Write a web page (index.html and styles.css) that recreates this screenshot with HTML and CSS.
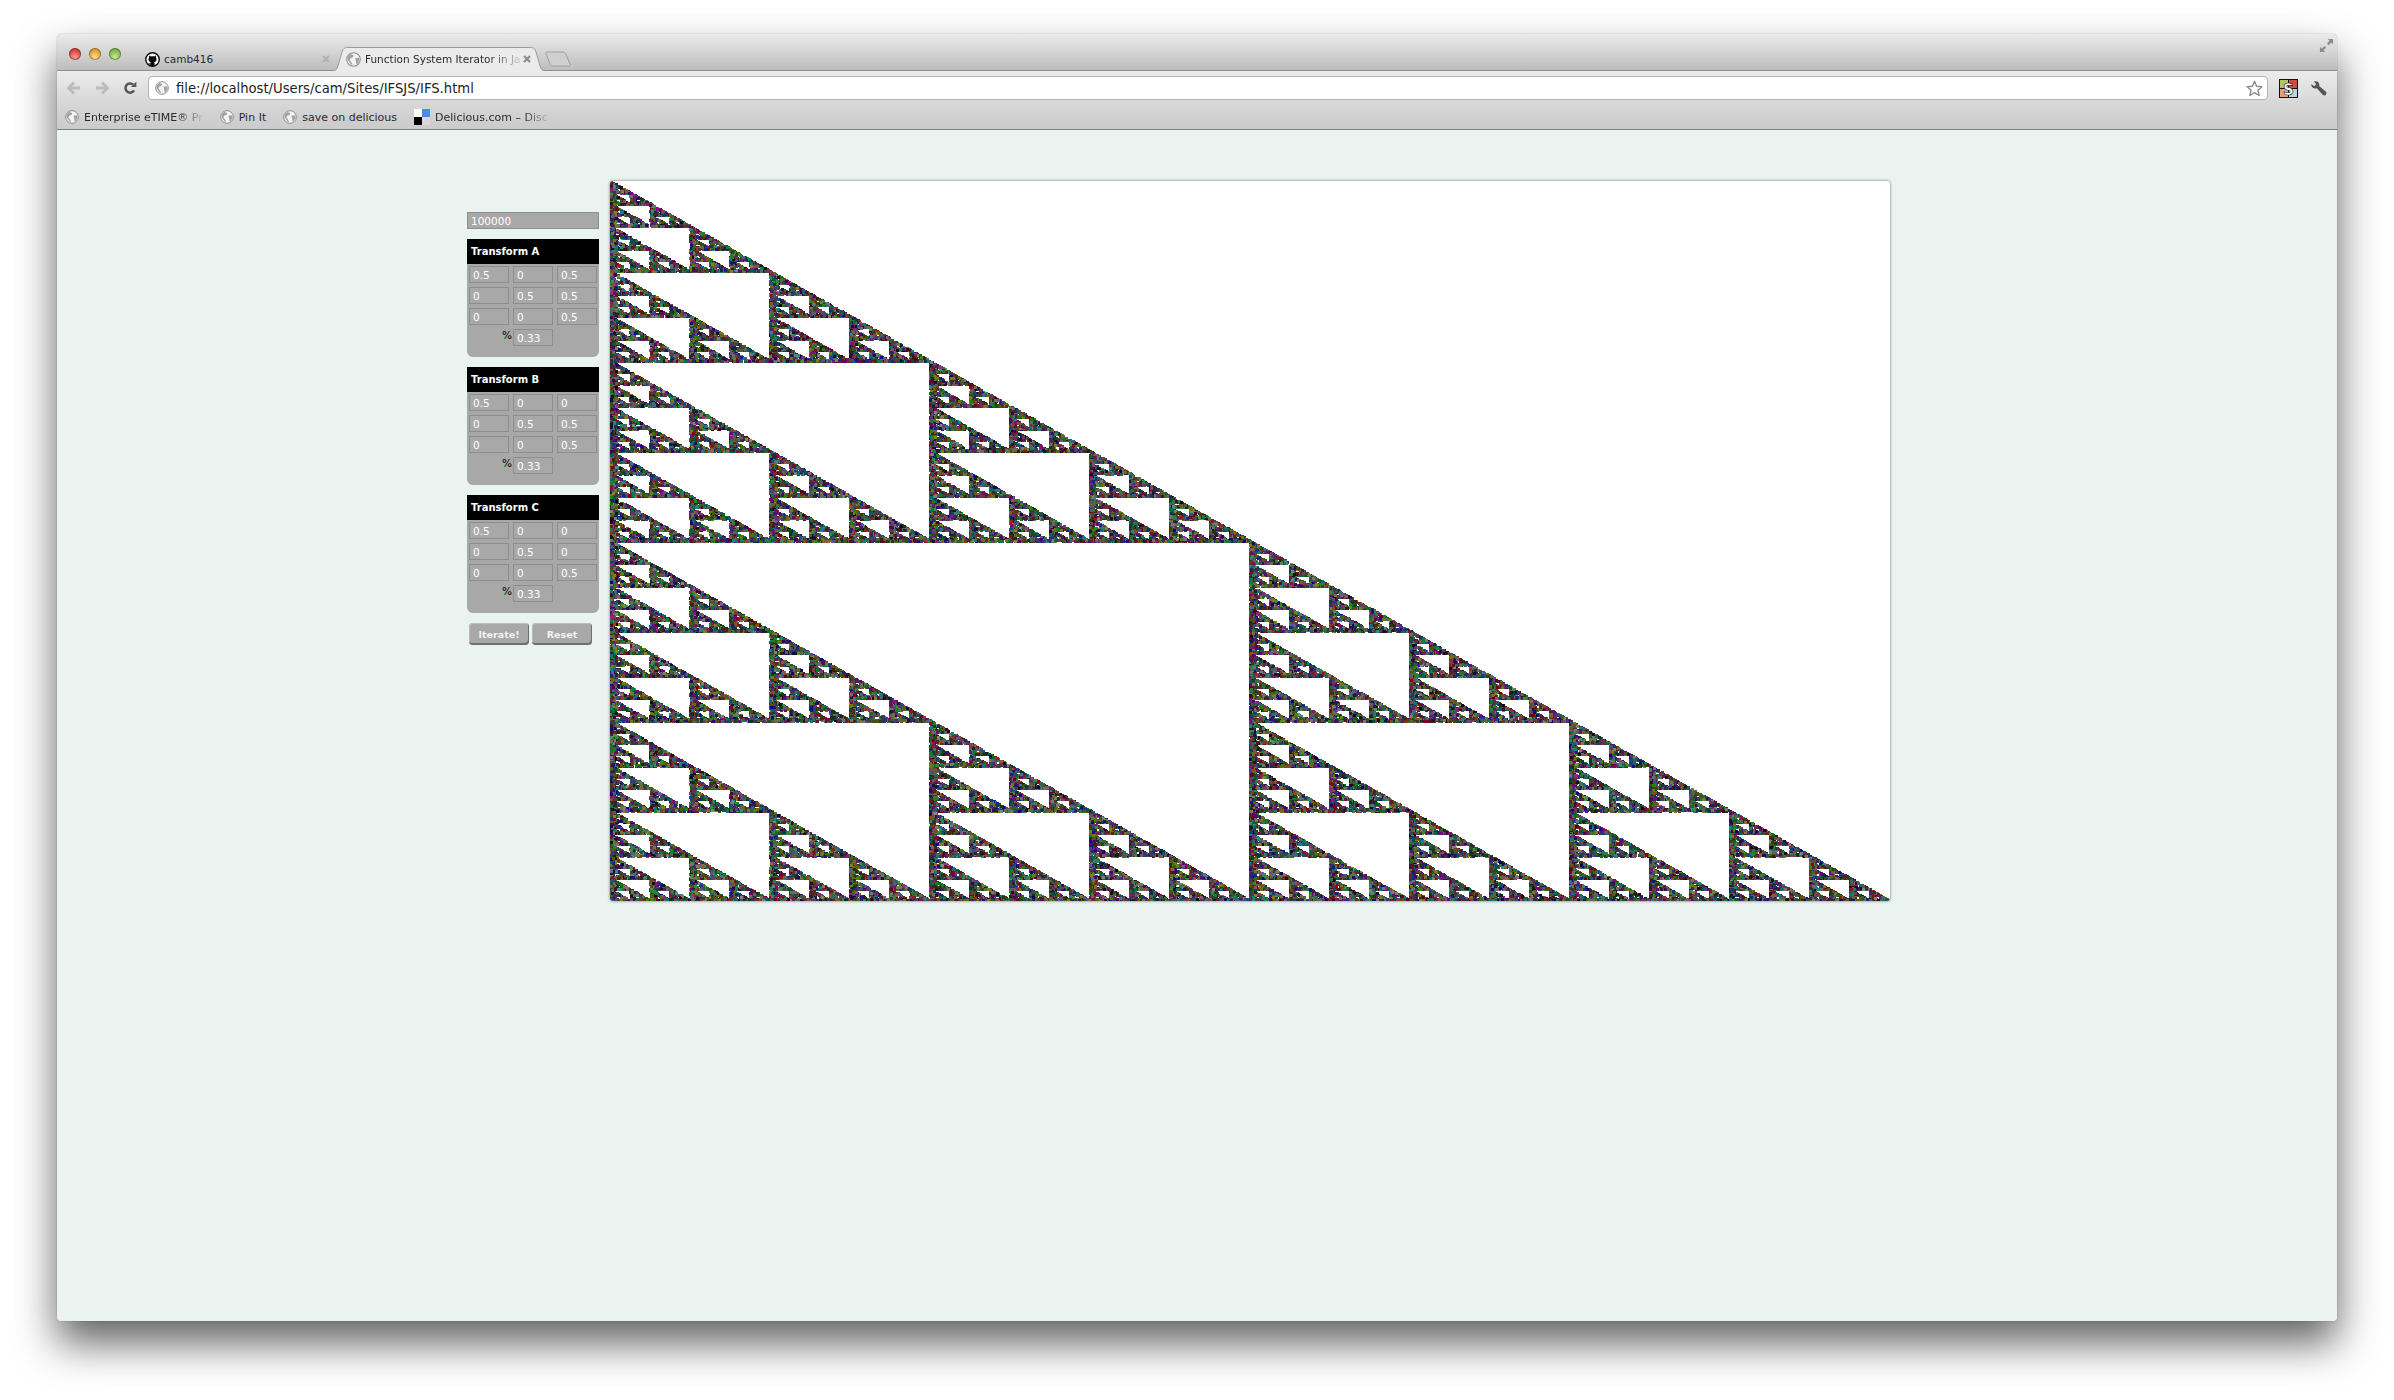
FILE: index.html
```html
<!DOCTYPE html>
<html>

<head>
    <title>Function System Iterator in JavaScript</title>
    <meta charset="UTF-8">
    <link rel="stylesheet" href="styles.css">
</head>

<body>
    <svg class="defs">
        <defs>
            <symbol id="globe" viewBox="0 0 16 16">
                <circle cx="8" cy="8" r="7.2" fill="#f4f4f4" stroke="#8a8a8a" stroke-width="1.1"/>
                <path d="M5 2.2 8.2 3.4 7.4 5.6 5 6.4 3.8 8.6 5.6 10.6 7 13.8 5.4 13.4 3.4 10.6 1.6 8 2.4 4.6Z" fill="#a2a2a2"/>
                <path d="M9.6 6.6 13.6 6 14.4 8.6 12.4 12.6 10.8 13 10.6 9.6Z" fill="#a2a2a2"/>
            </symbol>
            <symbol id="close" viewBox="0 0 10 10">
                <path d="M2 2 8 8M8 2 2 8" stroke="currentColor" stroke-width="2.2"/>
            </symbol>
        </defs>
    </svg>

    <div class="window">
        <div class="titlebar">
            <div class="lights">
                <span class="light red"></span>
                <span class="light amber"></span>
                <span class="light green"></span>
            </div>
            <div class="tabs">
                <div class="tab">
                    <svg class="tab-shape" viewBox="0 0 214 24" preserveAspectRatio="none">
                        <path d="M0 24C4 24 5 22 6 19L10 5C11 2 12 .5 16 .5H198C202 .5 203 2 204 5L208 19C209 22 210 24 214 24Z" fill="#d6d6d6" stroke="#a8a8a8"/>
                    </svg>
                    <svg class="favicon" viewBox="0 0 16 16">
                        <circle cx="8" cy="8" r="7.2" fill="#fff" stroke="#0a0a0a" stroke-width="1.5"/>
                        <path d="M4.6 3.6 6.2 4.7C7.3 4.3 8.7 4.3 9.8 4.7L11.4 3.6C11.8 4.5 11.9 5.3 11.7 6 12.3 6.7 12.5 7.5 12.3 8.4 12 9.8 10.9 10.5 9.7 10.7 10 11.1 10.2 11.7 10.2 12.4V15H5.8V13.2C4.7 13.5 4 13 3.5 12 4.1 12.1 4.8 12.3 5.8 12.1 5.8 11.6 6 11.1 6.3 10.7 5.1 10.5 4 9.8 3.7 8.4 3.5 7.5 3.7 6.7 4.3 6 4.1 5.3 4.2 4.5 4.6 3.6Z" fill="#0a0a0a"/>
                    </svg>
                    <span class="tab-title">camb416</span>
                    <svg class="tab-close"><use href="#close"/></svg>
                </div>
                <div class="tab active">
                    <svg class="tab-shape" viewBox="0 0 214 24" preserveAspectRatio="none">
                        <path d="M0 24C4 24 5 22 6 19L10 5C11 2 12 .5 16 .5H198C202 .5 203 2 204 5L208 19C209 22 210 24 214 24" fill="#ebebeb" stroke="#9c9c9c"/>
                    </svg>
                    <svg class="favicon"><use href="#globe"/></svg>
                    <span class="tab-title fading">Function System Iterator in Ja</span>
                    <svg class="tab-close"><use href="#close"/></svg>
                </div>
                <svg class="new-tab" viewBox="0 0 26 16">
                    <path d="M2 1H18C19.5 1 20 1.6 20.8 3L25 13C25.6 14.3 25 15 23.6 15H8C6.6 15 5.8 14.5 5.2 13.2L1 3C.5 1.8 .9 1 2 1Z" fill="#d0d0d0" stroke="#9e9e9e"/>
                </svg>
            </div>
            <svg class="fullscreen" viewBox="0 0 16 16">
                <path d="M9.2 1H15V6.8L13 4.8 10.2 7.6 8.4 5.8 11.2 3ZM6.8 15H1V9.2L3 11.2 5.8 8.4 7.6 10.2 4.8 13Z" fill="#8d8d8d"/>
            </svg>
        </div>

        <div class="toolbar">
            <svg class="nav-icon" viewBox="0 0 14 14">
                <path d="M7 1.5 1.5 7 7 12.5M2 7H13" fill="none" stroke="#bcbcbc" stroke-width="2.8"/>
            </svg>
            <svg class="nav-icon" viewBox="0 0 14 14">
                <path d="M7 1.5 12.5 7 7 12.5M12 7H1" fill="none" stroke="#bcbcbc" stroke-width="2.8"/>
            </svg>
            <svg class="nav-icon reload" viewBox="0 0 14 14">
                <path d="M11 9.4A4.6 4.6 0 1 1 10.2 3.7" fill="none" stroke="#565656" stroke-width="2.5"/>
                <path d="M8 6H13.4V.6Z" fill="#565656"/>
            </svg>
            <div class="omnibox">
                <svg class="favicon"><use href="#globe"/></svg>
                <span class="url">file://localhost/Users/cam/Sites/IFSJS/IFS.html</span>
                <svg class="star" viewBox="0 0 18 18">
                    <path d="M9 1.4 11.2 6.6 16.8 7.1 12.6 10.8 13.9 16.4 9 13.4 4.1 16.4 5.4 10.8 1.2 7.1 6.8 6.6Z" fill="#fff" stroke="#8c8c8c" stroke-width="1.5" stroke-linejoin="round"/>
                </svg>
            </div>
            <svg class="ext-icon" viewBox="0 0 19 19">
                <rect width="19" height="19" fill="#111"/>
                <rect x="1" y="1" width="8" height="8" fill="#b4c268"/>
                <rect x="10" y="1" width="8" height="8" fill="#c8503e"/>
                <rect x="1" y="10" width="8" height="8" fill="#dca27e"/>
                <rect x="10" y="10" width="8" height="8" fill="#b0d6ea"/>
                <text x="9.5" y="15.5" class="ext-letter">S</text>
            </svg>
            <svg class="wrench" viewBox="0 0 18 18">
                <path d="M1.6 4.2 4.4 6.6 6.6 4.6 4.2 1.8C6.4.8 8.8 1.6 9.6 3.6 10 4.6 10 5.6 9.7 6.4L16.6 12.2C17.6 13.2 17.6 14.6 16.8 15.6 15.8 16.6 14.4 16.6 13.4 15.6L7.2 8.8C5 9.6 2.8 8.8 1.8 7 1.3 6.1 1.2 5.1 1.6 4.2Z" fill="#555"/>
            </svg>
        </div>

        <div class="bookmarks">
            <div class="bookmark">
                <svg class="favicon"><use href="#globe"/></svg>
                <span class="bookmark-title fading">Enterprise eTIME® Pr</span>
            </div>
            <div class="bookmark">
                <svg class="favicon"><use href="#globe"/></svg>
                <span class="bookmark-title">Pin It</span>
            </div>
            <div class="bookmark">
                <svg class="favicon"><use href="#globe"/></svg>
                <span class="bookmark-title">save on delicious</span>
            </div>
            <div class="bookmark">
                <svg class="delicious" viewBox="0 0 16 16">
                    <rect width="8" height="8" fill="#fff"/>
                    <rect x="8" width="8" height="8" fill="#4a8fdc"/>
                    <rect y="8" width="8" height="8" fill="#000"/>
                    <rect x="8" y="8" width="8" height="8" fill="#d8d8d8"/>
                </svg>
                <span class="bookmark-title fading">Delicious.com – Disc</span>
            </div>
        </div>

        <div class="page">
            <div class="controls">
                <input class="count" type="text" value="100000">

                <div class="transform">
                    <h3>Transform A</h3>
                    <div class="matrix">
                        <input type="text" value="0.5"><input type="text" value="0"><input type="text" value="0.5">
                        <input type="text" value="0"><input type="text" value="0.5"><input type="text" value="0.5">
                        <input type="text" value="0"><input type="text" value="0"><input type="text" value="0.5">
                        <label>%</label><input type="text" value="0.33">
                    </div>
                </div>

                <div class="transform">
                    <h3>Transform B</h3>
                    <div class="matrix">
                        <input type="text" value="0.5"><input type="text" value="0"><input type="text" value="0">
                        <input type="text" value="0"><input type="text" value="0.5"><input type="text" value="0.5">
                        <input type="text" value="0"><input type="text" value="0"><input type="text" value="0.5">
                        <label>%</label><input type="text" value="0.33">
                    </div>
                </div>

                <div class="transform">
                    <h3>Transform C</h3>
                    <div class="matrix">
                        <input type="text" value="0.5"><input type="text" value="0"><input type="text" value="0">
                        <input type="text" value="0"><input type="text" value="0.5"><input type="text" value="0">
                        <input type="text" value="0"><input type="text" value="0"><input type="text" value="0.5">
                        <label>%</label><input type="text" value="0.33">
                    </div>
                </div>

                <div class="buttons">
                    <button id="iterate">Iterate!</button>
                    <button id="reset">Reset</button>
                </div>
            </div>

            <canvas id="ifs" width="1280" height="720"></canvas>
        </div>
    </div>

    <script src="script.js"></script>
</body>

</html>
```

FILE: styles.css
```css
body {
    font-family: "DejaVu Sans", "Open Sans", sans-serif;
    margin: 0;
    padding: 34px 57px 0;
    height: 1400px;
    box-sizing: border-box;
    overflow: hidden;
    background: white;
}
.defs {
    display: none;
}
.window {
    height: 1287px;
    display: flex;
    flex-direction: column;
    border-radius: 5px 5px 4px 4px;
    box-shadow: 0 22px 42px rgba(0,0,0,0.62), 0 0 1px #666;
    overflow: hidden;
}
.titlebar {
    height: 37px;
    box-sizing: border-box;
    flex: none;
    display: flex;
    align-items: flex-end;
    background: linear-gradient(#ebebeb, #bdbdbd);
    border-bottom: 1px solid #8f8f8f;
    position: relative;
}
.lights {
    display: flex;
    gap: 8px;
    margin: 0 0 10px 12px;
}
.light {
    width: 12px;
    height: 12px;
    border-radius: 50%;
    box-shadow: inset 0 0 0 1px rgba(0,0,0,0.3);
}
.red {
    background: radial-gradient(circle at 50% 75%, #ff9a94, #d23a36 70%);
}
.amber {
    background: radial-gradient(circle at 50% 75%, #ffdc90, #d9962a 70%);
}
.green {
    background: radial-gradient(circle at 50% 75%, #cbeb96, #74b044 70%);
}
.tabs {
    display: flex;
    align-items: flex-end;
    margin-left: 10px;
    margin-bottom: -1px;
}
.tab {
    width: 214px;
    height: 24px;
    margin-right: -13px;
    padding: 0 14px 0 14px;
    box-sizing: border-box;
    display: flex;
    align-items: center;
    position: relative;
    font-size: 10.5px;
    color: #2a2a2a;
}
.tab.active {
    z-index: 1;
}
.tab-shape {
    position: absolute;
    left: 0;
    top: 0;
    width: 100%;
    height: 100%;
    z-index: -1;
}
.tab-title {
    flex: 1;
    white-space: nowrap;
    overflow: hidden;
}
.tab .favicon {
    width: 15px;
    height: 15px;
    margin-right: 4px;
}
.fading {
    -webkit-mask-image: linear-gradient(to right, #000 78%, rgba(0,0,0,0.1));
}
.tab-close {
    width: 10px;
    height: 10px;
    flex: none;
    color: #b0b0b0;
}
.active .tab-close {
    color: #8d8d8d;
}
.favicon {
    width: 14px;
    height: 14px;
    flex: none;
}
.new-tab {
    width: 26px;
    height: 16px;
    margin: 0 0 4px 12px;
}
.fullscreen {
    width: 15px;
    height: 15px;
    position: absolute;
    right: 3px;
    top: 4px;
}
.toolbar {
    height: 34px;
    flex: none;
    display: flex;
    align-items: center;
    padding-left: 10px;
    background: linear-gradient(#ececec, #d6d6d6);
}
.nav-icon {
    width: 14px;
    height: 14px;
    margin-right: 14px;
    flex: none;
}
.reload {
    margin-right: 11px;
}
.omnibox {
    width: 2120px;
    height: 24px;
    box-sizing: border-box;
    display: flex;
    align-items: center;
    padding: 0 4px 0 6px;
    background: white;
    border: 1px solid #b3b3b3;
    border-radius: 4px;
}
.url {
    flex: 1;
    margin-left: 7px;
    font-size: 13.2px;
    color: #222;
}
.star {
    width: 17px;
    height: 17px;
}
.ext-icon {
    width: 19px;
    height: 19px;
    margin-left: 11px;
}
.ext-letter {
    font: bold 15px "DejaVu Sans", sans-serif;
    text-anchor: middle;
    fill: white;
    stroke: #111;
    stroke-width: 0.6;
}
.wrench {
    width: 17px;
    height: 17px;
    margin-left: 12px;
}
.bookmarks {
    height: 25px;
    box-sizing: border-box;
    flex: none;
    display: flex;
    align-items: center;
    padding-left: 8px;
    gap: 17px;
    background: linear-gradient(#d6d6d6, #cbcbcb);
    border-bottom: 1px solid #808080;
    font-size: 11px;
    color: #2a2a2a;
}
.bookmark {
    display: flex;
    align-items: center;
    gap: 5px;
}
.bookmark-title {
    white-space: nowrap;
}
.delicious {
    width: 16px;
    height: 16px;
}
.page {
    flex: 1;
    display: flex;
    align-items: flex-start;
    gap: 11px;
    padding: 51px 0 0 410px;
    background: #eaf3ef;
}
.controls {
    width: 132px;
    padding-top: 31px;
    flex: none;
}
input {
    box-sizing: border-box;
    width: 40px;
    height: 17px;
    margin: 0;
    padding: 0 3px;
    background: #a8a8a8;
    border: 1px solid #8e8e8e;
    border-radius: 0;
    color: white;
    font-family: "DejaVu Sans", sans-serif;
    font-size: 10.5px;
    outline: none;
}
.count {
    display: block;
    width: 132px;
}
.transform {
    margin-top: 10px;
    height: 118px;
    background: #a8a8a8;
    border-radius: 0 0 6px 6px;
}
.transform h3 {
    margin: 0;
    height: 25px;
    padding-left: 4px;
    background: black;
    color: white;
    font-size: 10px;
    font-weight: bold;
    line-height: 25px;
}
.matrix {
    display: grid;
    grid-template-columns: repeat(3, 40px);
    column-gap: 4px;
    row-gap: 4px;
    padding: 2px 2px 0;
}
.matrix label {
    margin-right: -3px;
    color: black;
    font-size: 10.5px;
    text-align: right;
    line-height: 12px;
}
.buttons {
    display: flex;
    gap: 3px;
    margin: 10px 0 0 2px;
}
button {
    height: 22px;
    width: 60px;
    padding: 0;
    background: #a8a8a8;
    color: #f2f2f2;
    border: none;
    border-radius: 4px;
    box-shadow: inset -1px -2px 0 #6f6f6f, inset 1px 1px 0 #bcbcbc;
    font-family: "DejaVu Sans", sans-serif;
    font-size: 9.5px;
    font-weight: bold;
}
canvas {
    display: block;
    flex: none;
    background: white;
    border-radius: 3px;
    box-shadow: 0 0 3px rgba(0,0,0,0.55);
    filter: blur(0.5px);
}
```

FILE: script.js
```js
var canvas = document.getElementById('ifs');
var ctx = canvas.getContext('2d');

// small seeded generator so each run gives the same picture
var seed = 416;
function rnd() {
    seed = (seed * 16807) % 2147483647;
    return seed / 2147483647;
}

var transforms = [
    { dx: 0, dy: 0 },
    { dx: 0, dy: 0.5 },
    { dx: 0.5, dy: 0.5 }
];

function iterate(count) {
    var x = 0, y = 0;
    for (var i = 0; i < count; i++) {
        var t = transforms[Math.floor(rnd() * 3)];
        x = x * 0.5 + t.dx;
        y = y * 0.5 + t.dy;
        var r = Math.floor(rnd() * 140);
        var g = Math.floor(rnd() * 140);
        var b = Math.floor(rnd() * 140);
        ctx.fillStyle = 'rgb(' + r + ',' + g + ',' + b + ')';
        ctx.fillRect(Math.floor(x * 1279), Math.floor(y * 719), 3, 3);
    }
}

iterate(100000);
```
